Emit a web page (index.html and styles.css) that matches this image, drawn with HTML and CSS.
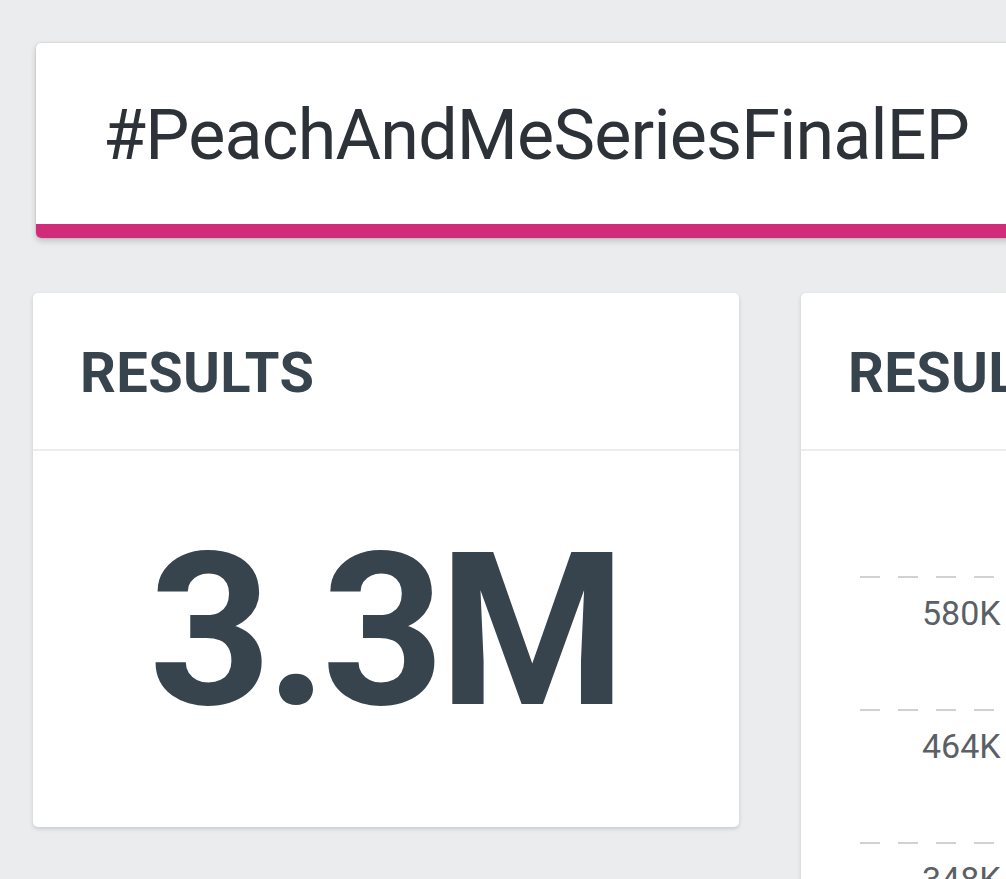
FILE: index.html
```html
<!DOCTYPE html>
<html>
<head>
<meta charset="utf-8">
<link rel="stylesheet" href="styles.css">
</head>
<body>
<div class="page">
  <div class="hashtag-card">
    <div class="hashtag">#PeachAndMeSeriesFinalEP</div>
    <div class="accent"></div>
  </div>
  <div class="row">
    <div class="card">
      <div class="card-head">RESULTS</div>
      <div class="card-body big">
        <div class="value">3.3M</div>
      </div>
    </div>
    <div class="card tall">
      <div class="card-head">RESULTS</div>
      <div class="card-body chart">
        <div class="gridline"></div>
        <div class="tick">580K</div>
        <div class="gridline"></div>
        <div class="tick">464K</div>
        <div class="gridline"></div>
        <div class="tick">348K</div>
      </div>
    </div>
  </div>
</div>
</body>
</html>
```

FILE: styles.css
```css
html, body {
  margin: 0;
  padding: 0;
  background: #ebecee;
  overflow: hidden;
  height: 879px;
}
.page {
  width: 1600px;
  padding-top: 43px;
  font-family: Roboto, "Liberation Sans", sans-serif;
}
.hashtag-card {
  margin-left: 36px;
  width: 1500px;
  background: #fff;
  border-radius: 5px;
  overflow: hidden;
  box-shadow: 0 3px 6px rgba(0,0,0,0.18), 0 0 0 1px rgba(0,0,0,0.05);
}
.hashtag {
  height: 181px;
  box-sizing: border-box;
  padding: 57px 0 0 67px;
  font-size: 70px;
  line-height: 70px;
  color: #2c3238;
  letter-spacing: -0.8px;
}
.accent {
  height: 14px;
  background: #d12c79;
}
.row {
  display: flex;
  gap: 62px;
  margin-top: 55px;
  margin-left: 33px;
}
.card {
  width: 706px;
  height: 534px;
  background: #fff;
  border-radius: 5px;
  box-shadow: 0 2px 4px rgba(0,0,0,0.15);
  flex: none;
}
.card.tall {
  height: 800px;
}
.card-head {
  height: 158px;
  box-sizing: border-box;
  padding: 52px 0 0 47px;
  font-size: 56px;
  line-height: 56px;
  font-weight: 700;
  color: #37444d;
  letter-spacing: 0.4px;
  border-bottom: 2px solid #ececee;
}
.card-body.big {
  display: flex;
  justify-content: center;
  padding-top: 73px;
}
.value {
  font-size: 214px;
  line-height: 214px;
  font-weight: 700;
  color: #37444d;
  letter-spacing: -6px;
  margin-left: -3px;
}
.chart {
  padding: 125px 0 0 59px;
}
.gridline {
  height: 2px;
  background: repeating-linear-gradient(to right, #cfd2d5 0 20px, transparent 20px 38px);
}
.tick {
  height: 131px;
  box-sizing: border-box;
  padding: 15px 0 0 62px;
  font-size: 34px;
  line-height: 40px;
  color: #5a6066;
}
```
